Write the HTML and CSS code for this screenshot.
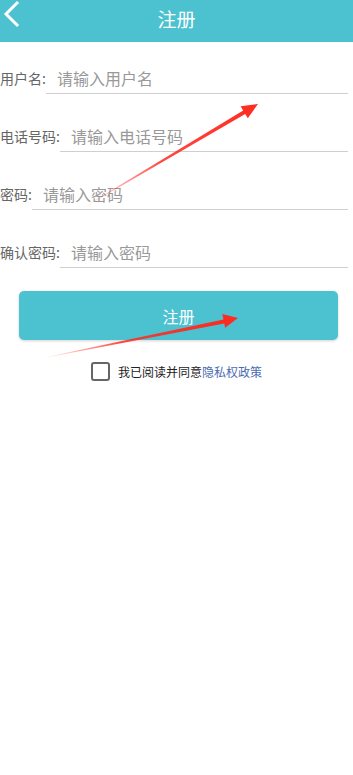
FILE: index.html
```html
<!DOCTYPE html>
<html lang="zh-CN">
<head>
  <meta charset="UTF-8">
  <title>注册</title>
  <link rel="stylesheet" href="styles.css">
</head>
<body>
  <div class="page">
    <header class="topbar">
      <svg class="back" width="24" height="30" viewBox="0 0 24 30">
        <polyline points="17,3 6,14 17,25" fill="none" stroke="#fff" stroke-width="3" stroke-linecap="square" stroke-linejoin="miter"/>
      </svg>
      <h1 class="title">注册</h1>
    </header>

    <form class="form">
      <div class="field">
        <label>用户名:</label>
        <input type="text" placeholder="请输入用户名">
      </div>
      <div class="field">
        <label>电话号码:</label>
        <input type="text" placeholder="请输入电话号码">
      </div>
      <div class="field">
        <label>密码:</label>
        <input type="password" placeholder="请输入密码">
      </div>
      <div class="field">
        <label>确认密码:</label>
        <input type="password" placeholder="请输入密码">
      </div>

      <button type="button" class="submit">注册</button>

      <div class="agree">
        <span class="box"></span>
        <span>我已阅读并同意<a href="#" class="policy">隐私权政策</a></span>
      </div>
    </form>

    <!-- red annotation arrows drawn over the screenshot -->
    <svg class="marks" width="353" height="775" viewBox="0 0 353 775">
      <defs>
        <linearGradient id="fade1" x1="81" y1="209" x2="258" y2="104" gradientUnits="userSpaceOnUse">
          <stop offset="0" stop-color="#ff2a1f" stop-opacity="0"/>
          <stop offset="0.45" stop-color="#ff2a1f" stop-opacity="0.85"/>
          <stop offset="1" stop-color="#ff2a1f"/>
        </linearGradient>
        <linearGradient id="fade2" x1="43" y1="358" x2="238" y2="318" gradientUnits="userSpaceOnUse">
          <stop offset="0" stop-color="#ff2a1f" stop-opacity="0"/>
          <stop offset="0.4" stop-color="#ff2a1f" stop-opacity="0.85"/>
          <stop offset="1" stop-color="#ff2a1f"/>
        </linearGradient>
      </defs>
      <polygon fill="url(#fade1)" points="80.9,208.8 243.2,110.5 240.6,106.2 258,104 247.8,118.2 245.2,113.9 81.1,209.2"/>
      <polygon fill="url(#fade2)" points="43,357.8 223.5,319.6 222.3,314.0 238,318 225.1,327.8 224.3,323.6 43,358.2"/>
    </svg>
  </div>
</body>
</html>
```

FILE: styles.css
```css
*{
  box-sizing: border-box;
}
body{
  margin: 0;
  padding: 0;
  background: #fff;
  font-family: "Noto Sans CJK SC", "Noto Sans", sans-serif;
}
.page{
  position: relative;
  width: 353px;
  min-height: 775px;
  background: #fff;
}
.topbar{
  height: 42px;
  background: #4cc2d0;
  display: flex;
  align-items: center;
  justify-content: center;
  position: relative;
}
.back{
  position: absolute;
  left: 0;
  top: 0;
}
.title{
  margin: 0;
  margin-top: -6px;
  color: #fff;
  font-size: 19px;
  font-weight: normal;
}
.form{
  padding-top: 20px;
}
.field{
  display: flex;
  align-items: center;
  height: 32px;
  margin-bottom: 26px;
  margin-right: 5px;
}
.field label{
  font-size: 14px;
  color: #666;
  white-space: nowrap;
}
.field input{
  flex: 1;
  min-width: 0;
  height: 32px;
  border: none;
  border-bottom: 1px solid #cfcfcf;
  outline: none;
  padding: 0 0 0 11px;
  font-size: 16px;
  font-family: inherit;
  color: #333;
  background: transparent;
}
.field input::placeholder{
  color: #999;
}
.submit{
  display: block;
  width: 319px;
  height: 49px;
  margin: -3px 0 0 19px;
  border: none;
  border-radius: 5px;
  background: #4cc2d0;
  color: #fff;
  font-size: 16px;
  font-family: inherit;
  box-shadow: 0 1px 3px rgba(0, 0, 0, 0.18);
}
.agree{
  display: flex;
  align-items: center;
  justify-content: center;
  margin-top: 22px;
  font-size: 12px;
  color: #222;
}
.box{
  width: 19px;
  height: 19px;
  border: 2px solid #666;
  border-radius: 3px;
  margin-right: 8px;
}
.policy{
  color: #4a6cb0;
  text-decoration: none;
}
.marks{
  position: absolute;
  left: 0;
  top: 0;
  pointer-events: none;
}
```
